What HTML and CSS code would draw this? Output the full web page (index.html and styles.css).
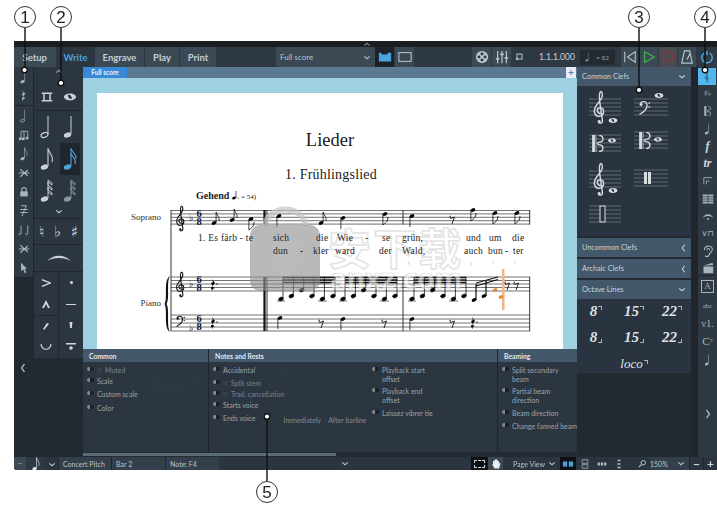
FILE: index.html
```html
<!DOCTYPE html>
<html lang="en">
<head>
<meta charset="utf-8">
<title>Dorico Write mode</title>
<link rel="stylesheet" href="styles.css">
</head>
<body>
<svg class="defs" aria-hidden="true">
  <defs>
    <symbol id="treble" viewBox="0 0 20 46"><path d="M11 30C6 30 5 24 9 23C15 21.5 17 30 11 33C4 36 1 28 4 22C6 17 13 13 13 6C13 2 11 1 10 3C8 7 9 12 11 24L13 38C14 43 8 44 8 40" fill="none" stroke="currentColor" stroke-width="1.8"/><circle cx="9" cy="40" r="1.8" fill="currentColor"/></symbol>
    <symbol id="bass" viewBox="0 0 20 24"><path d="M3 6C5 1 14 1 14 9C14 16 7 20 2 23" fill="none" stroke="currentColor" stroke-width="2.2"/><circle cx="4.5" cy="7" r="2.4" fill="currentColor"/><circle cx="17.5" cy="5" r="1.3" fill="currentColor"/><circle cx="17.5" cy="11" r="1.3" fill="currentColor"/></symbol>
    <symbol id="alto" viewBox="0 0 18 24"><path d="M0 0h4v24H0zM5 0h1v24H5z" fill="currentColor"/><path d="M7 12L10 10C17 11 17 0 10 1M7 12L10 14C17 13 17 24 10 23" fill="none" stroke="currentColor" stroke-width="2"/></symbol>
    <symbol id="whole" viewBox="0 0 14 8"><path d="M7 0C11 0 14 2 14 4S11 8 7 8S0 6 0 4S3 0 7 0ZM5 1.500C4 2 5 6 8 6.500C10 6 9 2 6 1.300Z" fill="currentColor" fill-rule="evenodd"/></symbol>
    <symbol id="i-half" viewBox="0 0 20 24"><ellipse cx="7.500" cy="20" rx="3.600" ry="2.300" transform="rotate(-20 7.500 20)" fill="none" stroke="currentColor" stroke-width="1.200"/><path d="M11 19V1" stroke="currentColor" stroke-width="1"/></symbol>
    <symbol id="i-q" viewBox="0 0 20 24"><ellipse cx="7.500" cy="20" rx="3.800" ry="2.500" transform="rotate(-20 7.500 20)" fill="currentColor"/><path d="M11 19V1" stroke="currentColor" stroke-width="1"/></symbol>
    <symbol id="i-8" viewBox="0 0 20 24"><ellipse cx="7.500" cy="20" rx="3.800" ry="2.500" transform="rotate(-20 7.500 20)" fill="currentColor"/><path d="M11 19V1C12 7 17 8 15 15" fill="none" stroke="currentColor" stroke-width="1.100"/></symbol>
    <symbol id="i-16" viewBox="0 0 20 24"><ellipse cx="7.500" cy="20" rx="3.800" ry="2.500" transform="rotate(-20 7.500 20)" fill="currentColor"/><path d="M11 19V1C12 6 17 7 16 12M11 6C12 11 17 12 15 17" fill="none" stroke="currentColor" stroke-width="1.100"/></symbol>
    <symbol id="i-32" viewBox="0 0 20 24"><ellipse cx="7.500" cy="20" rx="3.800" ry="2.500" transform="rotate(-20 7.500 20)" fill="currentColor"/><path d="M11 19V1L15 4V6L11 3V6L15 9V11L11 8V11L15 14V16L11 13" fill="none" stroke="currentColor" stroke-width=".9"/></symbol>
    <symbol id="i-dotrest" viewBox="0 0 16 16"><path d="M6 1L10 5L7 8L10 12C8 11 6 12 7 15C4 12 5 9 8 10L5 6L7 4Z" fill="currentColor"/></symbol>
    <symbol id="i-tuplet" viewBox="0 0 16 16"><path d="M4 13V3H13V12M8 13V3" fill="none" stroke="currentColor" stroke-width="1.200"/><circle cx="3" cy="13" r="2" fill="currentColor"/><circle cx="7" cy="13" r="2" fill="currentColor"/><circle cx="12" cy="12" r="2" fill="currentColor"/></symbol>
    <symbol id="i-lock" viewBox="0 0 16 16"><path d="M5 7V5a3 3 0 0 1 6 0V7" fill="none" stroke="currentColor" stroke-width="1.500"/><rect x="3" y="7" width="10" height="7" rx="1" fill="currentColor"/></symbol>
    <symbol id="i-cursor" viewBox="0 0 16 16"><path d="M4 1L12 9H9L11 14L9 15L7 10L4 12Z" fill="currentColor"/></symbol>
    <symbol id="i-scissor" viewBox="0 0 16 16"><path d="M3 3L13 12M3 13L13 4M1 8H15" fill="none" stroke="currentColor" stroke-width="1.400"/></symbol>
    <symbol id="i-bars" viewBox="0 0 16 12"><path d="M1 0H15V2H1ZM1 10H15V12H1ZM3 2H5V10H3ZM11 2H13V10H11Z" fill="currentColor"/></symbol>
    <symbol id="i-gr" viewBox="0 0 16 16"><path d="M4 1H11L5 15M3 6H13M3 10H13" fill="none" stroke="currentColor" stroke-width="1.300"/></symbol>
    <symbol id="i-reel" viewBox="0 0 16 16"><circle cx="8" cy="8" r="7" fill="currentColor"/><circle cx="8" cy="4.500" r="1.700" fill="#2e3943"/><circle cx="8" cy="11.500" r="1.700" fill="#2e3943"/><circle cx="4.500" cy="8" r="1.700" fill="#2e3943"/><circle cx="11.500" cy="8" r="1.700" fill="#2e3943"/></symbol>
    <symbol id="i-mixer" viewBox="0 0 16 16"><path d="M3 1V15M8 1V15M13 1V15" stroke="currentColor" stroke-width="1.400"/><path d="M1 9H5V11H1ZM6 4H10V6H6ZM11 8H15V10H11Z" fill="currentColor"/></symbol>
    <symbol id="i-metro" viewBox="0 0 16 16"><path d="M5 1H11L14 15H2ZM8 11L12 3" fill="none" stroke="currentColor" stroke-width="1.300"/></symbol>
    <symbol id="i-ear" viewBox="0 0 16 16"><path d="M4 7C3 2 12 0 13 6C13 10 9 10 9 13C8 15 5 15 5 13M7 7C7 4 10 5 10 7" fill="none" stroke="currentColor" stroke-width="1.300"/></symbol>
    <symbol id="i-clap" viewBox="0 0 16 16"><path d="M2 6H15V15H2Z M2 5L14 1L15 4L2 5Z" fill="currentColor"/></symbol>
    <symbol id="i-arch" viewBox="0 0 16 12"><path d="M1 9C3 2 13 2 15 9C12 5 4 5 1 9Z" fill="currentColor"/><circle cx="8" cy="10" r="1.300" fill="currentColor"/></symbol>
    <symbol id="i-rows" viewBox="0 0 16 16"><path d="M1 2H15V14H1Z" fill="currentColor"/><path d="M1 5H15M1 8H15M1 11H15M8 2V14" stroke="#2e3943"/></symbol>
    <symbol id="i-hand" viewBox="0 0 16 16"><path d="M4 8V4H6V2H8V2H10V4H12V8L13 6L14 7L12 14H6L3 9Z" fill="currentColor"/></symbol>
    <symbol id="i-mag" viewBox="0 0 16 16"><circle cx="10" cy="6" r="3.500" fill="none" stroke="currentColor" stroke-width="1.600"/><path d="M7 9L3 13" stroke="currentColor" stroke-width="2"/></symbol>
    <symbol id="chev-d" viewBox="0 0 10 6"><path d="M1.500 1.500L5 4.500L8.500 1.500" fill="none" stroke="currentColor" stroke-width="1.300"/></symbol>
    <symbol id="chev-l" viewBox="0 0 6 10"><path d="M4.500 1L1.500 5L4.500 9" fill="none" stroke="currentColor" stroke-width="1.300"/></symbol>
    <symbol id="chev-r" viewBox="0 0 6 10"><path d="M1.500 1L4.500 5L1.500 9" fill="none" stroke="currentColor" stroke-width="1.300"/></symbol>
  </defs>
</svg>

<main class="app">
  <div class="titlestrip"><svg class="ic-chev-up"><use href="#chev-d"/></svg></div>

  <header class="toolbar">
    <nav class="tabs">
      <span class="tab tab-setup">Setup</span>
      <span class="tab tab-active">Write</span>
      <span class="tab tab-engrave">Engrave</span>
      <span class="tab tab-play">Play</span>
      <span class="tab tab-print">Print</span>
    </nav>
    <div class="layout-select"><span>Full score</span><svg class="ic-chev"><use href="#chev-d"/></svg></div>
    <span class="tool-btn tool-on"><svg class="ic-14 blue" viewBox="0 0 16 12"><path d="M1 1H4V3H11V1H15V11H1Z" fill="currentColor"/></svg></span>
    <span class="tool-btn"><svg class="ic-14" viewBox="0 0 16 12"><rect x="1" y="1" width="14" height="10" fill="none" stroke="currentColor" stroke-width="1.200"/></svg></span>
    <div class="tool-right">
      <span class="tool-btn"><svg class="ic-14"><use href="#i-reel"/></svg></span>
      <span class="tool-btn"><svg class="ic-14"><use href="#i-mixer"/></svg></span>
      <span class="tool-btn tool-small"><svg class="ic-8" viewBox="0 0 8 8"><rect x="2" y="1" width="5" height="5" fill="none" stroke="currentColor"/><rect x="1" y="5" width="2" height="2" fill="currentColor"/></svg></span>
      <span class="position">1.1.1.000</span>
      <span class="tempo"><svg class="ic-10"><use href="#i-q"/></svg><span>= 82</span></span>
      <span class="transport"><svg class="ic-14" viewBox="0 0 16 16"><path d="M2 2V14M14 2L5 8L14 14Z" fill="none" stroke="currentColor" stroke-width="1.200"/></svg></span>
      <span class="transport"><svg class="ic-14 green" viewBox="0 0 16 16"><path d="M3 2L14 8L3 14Z" fill="none" stroke="currentColor" stroke-width="1.400"/></svg></span>
      <span class="transport transport-rec"><svg class="ic-14 red" viewBox="0 0 16 16"><circle cx="8" cy="8" r="5.500" fill="none" stroke="currentColor" stroke-width="1.400"/></svg></span>
      <span class="transport"><svg class="ic-14"><use href="#i-metro"/></svg></span>
      <span class="power"><svg class="ic-14 blue" viewBox="0 0 16 16"><path d="M5 3.500A6 6 0 1 0 11 3.500M8 1V6" fill="none" stroke="currentColor" stroke-width="1.800"/></svg></span>
    </div>
  </header>

  <div class="workspace">
    <aside class="left-rail">
      <div class="rail-group">
        <span class="rail-btn"><svg class="ic-14"><use href="#i-q"/></svg></span>
        <span class="rail-btn"><svg class="ic-12"><use href="#i-dotrest"/></svg></span>
      </div>
      <div class="rail-group">
        <span class="rail-btn"><svg class="ic-14"><use href="#i-half"/></svg></span>
        <span class="rail-btn"><svg class="ic-12"><use href="#i-tuplet"/></svg></span>
        <span class="rail-btn"><svg class="ic-14"><use href="#i-8"/></svg></span>
        <span class="rail-btn"><svg class="ic-12"><use href="#i-scissor"/></svg></span>
        <span class="rail-btn"><svg class="ic-12"><use href="#i-lock"/></svg></span>
        <span class="rail-btn"><svg class="ic-12"><use href="#i-gr"/></svg></span>
        <span class="rail-btn"><svg class="ic-12" viewBox="0 0 16 16"><path d="M4 2V12C4 15 1 15 1 12M13 2V12C13 15 10 15 10 12" fill="none" stroke="currentColor" stroke-width="1.200"/></svg></span>
        <span class="rail-btn"><svg class="ic-12"><use href="#i-scissor"/></svg></span>
        <span class="rail-btn"><svg class="ic-12"><use href="#i-cursor"/></svg></span>
      </div>
      <svg class="ic-chev-l rail-collapse"><use href="#chev-l"/></svg>
    </aside>

    <aside class="palette">
      <section class="pal pal-top">
        <svg class="ic-chev pal-up"><use href="#chev-d"/></svg>
        <div class="pal-row"><svg class="ic-12"><use href="#i-bars"/></svg><svg class="ic-12"><use href="#whole"/></svg></div>
      </section>
      <section class="pal pal-notes">
        <div class="pal-row h32"><svg class="ic-18"><use href="#i-half"/></svg><svg class="ic-18"><use href="#i-q"/></svg></div>
        <div class="pal-row h32"><svg class="ic-18"><use href="#i-8"/></svg><span class="pal-sel"><svg class="ic-18 blue"><use href="#i-16"/></svg></span></div>
        <div class="pal-row h32"><svg class="ic-18"><use href="#i-32"/></svg><svg class="ic-18 dim"><use href="#i-32"/></svg></div>
        <svg class="ic-chev pal-more"><use href="#chev-d"/></svg>
      </section>
      <section class="pal pal-acc">
        <span class="acc">♮</span><span class="acc">♭</span><span class="acc">♯</span>
      </section>
      <section class="pal pal-slur">
        <svg class="ic-slur" viewBox="0 0 26 8"><path d="M1 7C8 0 18 0 25 7C18 3 8 3 1 7Z" fill="currentColor"/></svg>
      </section>
      <section class="pal-grid">
        <span class="art"><svg class="ic-10" viewBox="0 0 12 10"><path d="M1 1L11 5L1 9" fill="none" stroke="currentColor" stroke-width="1.600"/></svg></span>
        <span class="art"><i class="art-dot"></i></span>
        <span class="art"><svg class="ic-8" viewBox="0 0 8 8"><path d="M4 0L8 8H6L4 4L2 8H0Z" fill="currentColor"/></svg></span>
        <span class="art"><i class="art-dash"></i></span>
        <span class="art"><svg class="ic-8" viewBox="0 0 8 8"><path d="M1 7L5 1L7 2L2 8Z" fill="currentColor"/></svg></span>
        <span class="art"><svg class="ic-8" viewBox="0 0 8 8"><path d="M2.500 0H5.500L4.800 6H3.200Z" fill="currentColor"/></svg></span>
        <span class="art"><svg class="ic-12" viewBox="0 0 12 8"><path d="M1 1C2 8 10 8 11 1" fill="none" stroke="currentColor" stroke-width="1.200"/></svg></span>
        <span class="art"><svg class="ic-10" viewBox="0 0 10 10"><path d="M0 1H10V2.500H0Z" fill="currentColor"/><circle cx="5" cy="6" r="1.800" fill="currentColor"/></svg></span>
      </section>
    </aside>

    <div class="center">
      <div class="score-tabs">
        <span class="score-tab">Full score</span>
        <span class="score-add">+</span>
      </div>
      <div class="canvas">
        <div class="page">
          <svg class="score" viewBox="97 93 466 256">
            <defs>
              <ellipse id="hd" rx="2.400" ry="1.700" transform="rotate(-22)"/>
              <g id="q-dn"><use href="#hd"/><path d="M-2.100 0V11" stroke="#111" stroke-width=".8"/></g>
              <g id="e-up"><use href="#hd"/><path d="M2.100 0V-11C3 -7 6 -6 5 -2" stroke="#111" stroke-width=".8" fill="none"/></g>
              <g id="e-dn"><use href="#q-dn"/><path d="M-2.100 11C0 9 3 8 3 3" stroke="#111" stroke-width=".9" fill="none"/></g>
              <path id="r8" d="M-1 -3a1.200 1.200 0 1 0 1 2L2.500 -2L0 5" fill="none" stroke="#111" stroke-width=".9"/>
              <g id="r4d"><path d="M-1 -6L2 -2L-.5 1L2 4C0 3 -1 4 0 6C-3 4 -2 1 0 2L-2 -2L0 -3Z"/><circle cx="4" cy="-1" r=".7"/></g>
              <g id="timesig"><text class="ts" y="0">6</text><text class="ts" y="7.500">8</text></g>
              <g id="run-a" stroke="#111" stroke-width=".8">
                <path d="M2 -22V-1M12.400 -22V-4M22.700 -22V-10M33 -22V-4M43.400 -22V-1M54 -22V-4"/>
                <path d="M2 -21.500H54" stroke-width="1.600"/><path d="M2 -19H54" stroke-width="1.600"/><path d="M2 -16.500H54" stroke-width="1.600"/>
                <use href="#hd" x="0" y="0"/><use href="#hd" x="10.400" y="-3"/><use href="#hd" x="20.700" y="-9"/><use href="#hd" x="31" y="-3"/><use href="#hd" x="41.400" y="0"/><use href="#hd" x="52" y="-3"/>
                <path d="M-4 2H4M37 2H46" stroke-width=".6"/>
              </g>
            </defs>

            <text class="t-title" x="330" y="146">Lieder</text>
            <text class="t-sub" x="331" y="179">1. Frühlingslied</text>
            <text class="t-tempo" x="196" y="199">Gehend</text>
            <g class="small-note"><ellipse cx="234" cy="198" rx="2" ry="1.400" transform="rotate(-22 234 198)"/><path d="M236 198V191" stroke="#111" stroke-width=".7"/><circle cx="238" cy="198" r=".5"/></g>
            <text class="t-small" x="241" y="199">= 54)</text>
            <text class="t-name" x="161" y="220">Soprano</text>
            <text class="t-name" x="161" y="306">Piano</text>

            <path class="staff" d="M171 210.500H530M171 213.900H530M171 217.300H530M171 220.700H530M171 224.100H530"/>
            <path class="staff" d="M171 277H530M171 280.500H530M171 284H530M171 287.500H530M171 291H530"/>
            <path class="staff" d="M171 315H530M171 319H530M171 323H530M171 327H530M171 331H530"/>
            <path class="bar" d="M171 210V331M403 210V224.500M403 277V331M529.700 210V224.500M529.700 277V331M267 210V224.500M267 277V331"/>
            <path class="bar-thick" d="M264.500 210V224.500M264.500 277V331"/>
            <path class="brace" d="M170 276C163 280 168 298 164.500 304C168 310 163 328 170 332C166 326 170 310 166.500 304C170 298 166 282 170 276Z"/>

            <use href="#treble" class="clef" x="174" y="205" width="14" height="28"/>
            <use href="#treble" class="clef" x="174" y="271" width="14" height="28"/>
            <use href="#bass" class="clef" x="174" y="315" width="13" height="12"/>
            <text class="t-flat" x="189" y="221">♭</text>
            <text class="t-flat" x="189" y="287">♭</text>
            <text class="t-flat" x="189" y="331">♭</text>
            <use href="#timesig" x="199" y="217"/>
            <use href="#timesig" x="199" y="283"/>
            <use href="#timesig" x="199" y="322"/>

            <use href="#e-up" x="214" y="223"/><use href="#e-up" x="232" y="220"/><use href="#e-dn" x="251" y="219"/>
            <use href="#q-dn" x="279" y="216"/><use href="#e-up" x="321" y="223"/><use href="#q-dn" x="343" y="218"/>
            <use href="#e-dn" x="385" y="214"/><use href="#q-dn" x="412" y="216"/><use href="#r8" x="452" y="219"/>
            <use href="#e-dn" x="473" y="210"/><use href="#e-dn" x="495" y="213"/><use href="#e-dn" x="517" y="213"/>

            <use href="#r4d" x="213" y="285"/><use href="#r4d" x="213" y="323"/>
            <use href="#run-a" x="281" y="299"/><use href="#run-a" x="343" y="299"/><use href="#run-a" x="412" y="299"/>
            <path class="beam" d="M476 283L498 277M476 286L498 279.500M476 284V300M486 281V296"/>
            <use href="#hd" x="474" y="300"/><use href="#hd" x="484" y="296"/>
            <rect class="ghost" x="502" y="269" width="2.500" height="41"/>
            <path class="ghost-marks" d="M409 261V265M471 262V266M493 261V264M515 261V264"/>
            <use href="#hd" class="orange" x="495" y="290"/><use href="#hd" class="orange" x="501" y="297"/>
            <use href="#r8" x="507" y="285"/><use href="#r8" x="516" y="285"/>
            <use href="#q-dn" x="280" y="318"/><use href="#r8" x="321" y="323"/><use href="#q-dn" x="343" y="319"/>
            <use href="#r8" x="384" y="323"/><use href="#q-dn" x="412" y="319"/><use href="#r8" x="452" y="323"/><use href="#r4d" x="473" y="323"/>

            <g class="wm">
              <path class="wm-arc" d="M265 226C268 204 303 204 306 226"/>
              <rect class="wm-box" x="250" y="225" width="70" height="66" rx="10"/>
              <path class="wm-shield" d="M272 240H298V262C298 270 290 274 285 276C280 274 272 270 272 262Z"/>
              <text class="wm-cn" x="328" y="265">安下载</text>
              <text class="wm-url" x="330" y="289">anxz.com</text>
            </g>
            <g class="t-lyric">
              <text x="198" y="241">1. Es färb - te</text><text x="273" y="241">sich</text><text x="316" y="241">die</text><text x="337" y="241">Wie</text><text x="365" y="241">-</text><text x="382" y="241">se</text><text x="402" y="241">grün,</text><text x="466" y="241">und</text><text x="489" y="241">um</text><text x="512" y="241">die</text>
              <text x="273" y="254">dun</text><text x="300" y="254">-</text><text x="313" y="254">kler</text><text x="335" y="254">ward</text><text x="379" y="254">der</text><text x="402" y="254">Wald,</text><text x="464" y="254">auch</text><text x="488" y="254">bun</text><text x="505" y="254">-</text><text x="513" y="254">ter</text>
            </g>
          </svg>
        </div>
      </div>

      <section class="props">
        <div class="prop-group pg-common">
          <h3 class="prop-head">Common</h3>
          <div class="prop-body">
            <div class="prop h11"><i class="tog"></i><i class="chk"></i><span class="off">Muted</span></div>
            <div class="prop h13"><i class="tog"></i><span>Scale</span><i class="fld fld-scale"></i></div>
            <div class="prop h14"><i class="tog"></i><span>Custom scale</span><i class="fld fld-custom"></i></div>
            <div class="prop h13"><i class="tog"></i><span>Color</span></div>
          </div>
        </div>
        <div class="prop-group pg-notes">
          <h3 class="prop-head">Notes and Rests</h3>
          <div class="prop-cols">
            <div class="prop-body col-a">
              <div class="prop h13"><i class="tog"></i><span>Accidental</span><i class="fld fld-acc"></i></div>
              <div class="prop h11"><i class="tog"></i><i class="chk"></i><span class="off">Split stem</span></div>
              <div class="prop h11"><i class="tog"></i><i class="chk"></i><span class="off">Trad. cancellation</span></div>
              <div class="prop h13"><i class="tog"></i><span>Starts voice</span></div>
              <div class="prop h13"><i class="tog"></i><span>Ends voice</span><span class="opt opt-first">Immediately</span><span class="opt">After barline</span></div>
            </div>
            <div class="prop-body col-b">
              <div class="prop h21"><i class="tog"></i><span class="wrap">Playback start offset</span></div>
              <div class="prop h22"><i class="tog"></i><span class="wrap">Playback end offset</span></div>
              <div class="prop h13"><i class="tog"></i><span>Laissez vibrer tie</span></div>
            </div>
          </div>
        </div>
        <div class="prop-group pg-beam">
          <h3 class="prop-head">Beaming</h3>
          <div class="prop-body">
            <div class="prop h21"><i class="tog"></i><span class="wrap">Split secondary beam</span></div>
            <div class="prop h22"><i class="tog"></i><span class="wrap">Partial beam direction</span></div>
            <div class="prop h13"><i class="tog"></i><span>Beam direction</span></div>
            <div class="prop h13"><i class="tog"></i><span class="nowrap">Change fanned beam dir</span></div>
          </div>
        </div>
        <div class="scrollbar"><span class="thumb"></span></div>
      </section>
    </div>

    <aside class="clefs">
      <div class="clef-head"><span>Common Clefs</span><svg class="ic-chev"><use href="#chev-d"/></svg></div>
      <div class="clef-body">
        <svg class="clef-art" viewBox="577 86 114 150">
          <path class="cl" d="M589 99H621M589 103H621M589 107H621M589 111H621M589 115H621"/>
          <use href="#treble" x="591" y="90" width="18" height="36"/><use href="#whole" x="608" y="118" width="10" height="5"/>
          <path class="cl" d="M634 99H668M634 103H668M634 107H668M634 111H668M634 115H668"/>
          <use href="#bass" x="638" y="100" width="13" height="15"/><use href="#whole" x="654" y="93" width="10" height="5"/>
          <path class="cl" d="M589 135H621M589 139H621M589 143H621M589 147H621M589 151H621"/>
          <use href="#alto" x="592" y="135" width="13" height="17"/><use href="#whole" x="608" y="138" width="8" height="5"/>
          <path class="cl" d="M634 132H668M634 136H668M634 140H668M634 144H668M634 148H668"/>
          <use href="#alto" x="639" y="132" width="13" height="17"/><use href="#whole" x="654" y="137" width="8" height="5"/>
          <path class="cl" d="M589 171H621M589 175H621M589 179H621M589 183H621M589 187H621"/>
          <use href="#treble" x="591" y="162" width="18" height="36"/><use href="#whole" x="608" y="188" width="10" height="5"/>
          <path class="cl" d="M634 170H668M634 174H668M634 178H668M634 182H668M634 186H668"/>
          <path class="cl-fill" d="M644 172H647V184H644ZM648 172H651V184H648Z"/>
          <path class="cl" d="M589 206H621M589 210H621M589 214H621M589 218H621M589 222H621"/>
          <rect class="cl-box" x="600" y="206" width="5" height="16"/>
        </svg>
      </div>
      <div class="clef-head mt2"><span>Uncommon Clefs</span><svg class="ic-chev-l"><use href="#chev-l"/></svg></div>
      <div class="clef-head mt2"><span>Archaic Clefs</span><svg class="ic-chev-l"><use href="#chev-l"/></svg></div>
      <div class="clef-head mt2"><span>Octave Lines</span><svg class="ic-chev"><use href="#chev-d"/></svg></div>
      <div class="oct-grid">
        <span class="oct">8<i class="br-up"></i></span><span class="oct">15<i class="br-up"></i></span><span class="oct">22<i class="br-up"></i></span>
        <span class="oct">8<i class="br-dn"></i></span><span class="oct">15<i class="br-dn"></i></span><span class="oct">22<i class="br-dn"></i></span>
        <span class="oct oct-loco">loco<i class="br-up"></i></span>
      </div>
    </aside>

    <aside class="right-rail">
      <span class="rr rr-on"><svg class="ic-12"><use href="#treble"/></svg></span>
      <span class="rr accs">♯♭</span>
      <span class="rr"><svg class="ic-10"><use href="#alto"/></svg></span>
      <span class="rr"><svg class="ic-12"><use href="#i-q"/></svg></span>
      <span class="rr glyph-f">f</span>
      <span class="rr glyph-tr">tr</span>
      <span class="rr"><svg class="ic-10" viewBox="0 0 12 10"><path d="M1 9V1H11M4 9V5H8" fill="none" stroke="currentColor"/></svg></span>
      <span class="rr"><svg class="ic-12"><use href="#i-rows"/></svg></span>
      <span class="rr"><svg class="ic-12"><use href="#i-arch"/></svg></span>
      <span class="rr glyph-vn">∨⊓</span>
      <span class="rr"><svg class="ic-14"><use href="#i-ear"/></svg></span>
      <span class="rr rr-last"><svg class="ic-12"><use href="#i-clap"/></svg></span>
      <span class="rr rr-a"><b class="boxed">A</b></span>
      <span class="rr rr-abc">abc</span>
      <span class="rr rr-v">v1.</span>
      <span class="rr rr-c">C<sup>7</sup></span>
      <span class="rr rr-end"><svg class="ic-12"><use href="#i-q"/></svg></span>
      <svg class="ic-chev-l rail-open"><use href="#chev-r"/></svg>
    </aside>
  </div>

  <footer class="status">
    <span class="st st-dots">▪▪▪</span>
    <span class="st st-note"><svg class="ic-14"><use href="#i-8"/></svg></span>
    <span class="st st-chev"><svg class="ic-chev"><use href="#chev-d"/></svg></span>
    <span class="st st-text st-53">Concert Pitch</span>
    <span class="st st-text st-54">Bar 2</span>
    <span class="st st-text st-54">Note: F4</span>
    <span class="st-mid"><svg class="ic-chev"><use href="#chev-d"/></svg></span>
    <span class="st st-black st-17"><i class="marquee"></i></span>
    <span class="st st-15"><svg class="ic-12 white"><use href="#i-hand"/></svg></span>
    <span class="st st-view"><span>Page View</span><svg class="ic-chev"><use href="#chev-d"/></svg></span>
    <span class="st st-black st-16"><svg class="ic-12 blue" viewBox="0 0 14 8"><path d="M1 1H6V7H1ZM8 1H13V7H8Z" fill="currentColor"/></svg></span>
    <span class="st st-16"><svg class="ic-10" viewBox="0 0 10 14"><path d="M1 1H9V6H1ZM1 8H9V13H1Z" fill="none" stroke="currentColor"/></svg></span>
    <span class="st st-16"><svg class="ic-10" viewBox="0 0 14 8"><path d="M1 2H4V6H1ZM5.500 2H8.500V6H5.500ZM10 2H13V6H10Z" fill="currentColor"/></svg></span>
    <span class="st st-16"><svg class="ic-10" viewBox="0 0 8 14"><path d="M2 1H6V3H2ZM2 6H6V8H2ZM2 11H6V13H2Z" fill="currentColor"/></svg></span>
    <span class="st st-mag"><svg class="ic-10"><use href="#i-mag"/></svg></span>
    <span class="st st-zoom"><span>150%</span><svg class="ic-chev"><use href="#chev-d"/></svg></span>
    <span class="st st-pm">−</span>
    <span class="st st-pm">+</span>
  </footer>
</main>

<svg class="callouts" viewBox="0 0 717 505">
  <g class="co-line">
    <path d="M25 28V68M61 28V81M639 28V88M705 28V68M267 419V481"/>
  </g>
  <g class="co-dot">
    <circle cx="24.500" cy="70" r="2.800"/><circle cx="61" cy="83" r="2.800"/><circle cx="639" cy="90" r="2.800"/><circle cx="705" cy="70" r="2.800"/><circle cx="267" cy="416.500" r="2.800"/>
  </g>
  <g class="co-ring">
    <circle cx="25" cy="17" r="10.500"/><circle cx="61" cy="17" r="10.500"/><circle cx="639" cy="17" r="10.500"/><circle cx="705" cy="17" r="10.500"/><circle cx="267" cy="492" r="10.500"/>
  </g>
  <g class="co-num">
    <text x="25" y="23">1</text><text x="61" y="23">2</text><text x="639" y="23">3</text><text x="705" y="23">4</text><text x="267" y="498">5</text>
  </g>
</svg>
</body>
</html>
```

FILE: styles.css
```css
* { box-sizing: border-box; }
html, body { margin: 0; padding: 0; background: #fff; }
body { position: relative; width: 717px; height: 505px; overflow: hidden; font-family: Lato, "Noto Sans", sans-serif; }
.defs { position: absolute; width: 0; height: 0; }

svg { display: block; flex: none; }
.ic-8 { width: 8px; height: 8px; }
.ic-10 { width: 10px; height: 10px; }
.ic-12 { width: 12px; height: 12px; }
.ic-14 { width: 14px; height: 14px; }
.ic-18 { width: 20px; height: 24px; }
.ic-chev { width: 8px; height: 5px; }
.ic-chev-l { width: 5px; height: 8px; }
.ic-chev-up { width: 8px; height: 5px; transform: rotate(180deg); color: #7f8b94; }
.blue { color: #4ba3dc; }
.green { color: #3fb54a; }
.red { color: #8c3a3a; }
.white { color: #e8ecee; }
.dim { color: #8d989f; }

.app { display: flex; flex-direction: column; width: 703px; height: 429px; margin: 41px 0 0 14px; background: #20262c; color: #b9c4cb; border-radius: 0 0 0 3px; overflow: hidden; filter: blur(.3px); }

.titlestrip { height: 6px; background: #1a1e21; display: flex; justify-content: center; align-items: center; padding-left: 2px; }

.toolbar { height: 20px; display: flex; background: #2e3943; flex: none; }
.tabs { display: flex; gap: 1px; width: 260px; margin-right: 1px; }
.tab { display: flex; align-items: center; justify-content: center; font-size: 9.500px; font-weight: 700; background: #3b4955; color: #c4ced4; height: 20px; }
.tab-setup { width: 42px; justify-content: flex-end; padding-right: 9px; }
.tab-active { width: 37px; background: #2b3641; color: #4ba3dc; }
.tab-engrave { width: 49px; }
.tab-play { width: 34px; }
.tab-print { width: 36px; }
.layout-select { width: 99px; margin-left: 1px; display: flex; align-items: center; justify-content: space-between; padding: 0 4px; font-size: 8px; background: #3b4955; }
.tool-btn { width: 19px; height: 20px; display: flex; align-items: center; justify-content: center; background: #3b4955; margin-left: 1px; }
.tool-on { background: #1c2227; margin-left: 0; }
.tool-right { margin-left: auto; display: flex; align-items: center; height: 20px; }
.tool-small { width: 14px; background: transparent; }
.tool-right .tool-btn { background: #3b4955; }
.tool-right .tool-small { background: #2e3943; margin-right: 13px; }
.position { font-size: 8.600px; width: 41px; color: #c9d2d8; }
.tempo { display: flex; align-items: center; gap: 3px; width: 35px; height: 15px; padding-left: 3px; background: #232a30; font-size: 6.500px; color: #8d989f; margin-right: 6px; }
.transport { width: 18px; height: 20px; display: flex; align-items: center; justify-content: center; background: #3b4955; margin-right: 1px; }
.transport-rec { background: #4a4a50; }
.power { width: 20px; display: flex; justify-content: center; }

.workspace { flex: 1; display: flex; min-height: 0; }

.left-rail { width: 19px; display: flex; flex-direction: column; background: #222930; flex: none; }
.rail-group { background: #2e3944; border-bottom: 1px solid #1f252b; }
.rail-btn { display: flex; width: 19px; height: 19px; align-items: center; justify-content: center; color: #a9b4bb; }
.rail-collapse { margin: 85px 0 0 6px; width: 6px; height: 10px; color: #a9b4bb; }

.palette { width: 50px; display: flex; flex-direction: column; background: #222930; border-left: 1px solid #1f252b; flex: none; }
.pal { display: flex; flex-direction: column; background: #2c3641; border-bottom: 1px solid #20262c; color: #c9d2d8; }
.pal-top { height: 44px; align-items: center; }
.pal-up { transform: rotate(180deg); margin-top: 2px; opacity: .7; }
.pal-row { display: flex; justify-content: space-around; align-items: center; width: 100%; padding: 0 2px; }
.pal-top .pal-row { margin-top: 17px; }
.pal-notes { height: 108px; align-items: center; }
.h32 { height: 32px; }
.pal-sel { width: 20px; height: 32px; background: #1f262c; display: flex; align-items: center; justify-content: center; }
.pal-more { margin-top: 2px; }
.pal-acc { height: 26px; flex-direction: row; justify-content: space-around; align-items: center; }
.acc { font: 15px "DejaVu Sans", sans-serif; color: #d2d9de; }
.pal-slur { height: 27px; align-items: center; justify-content: center; }
.ic-slur { width: 26px; height: 8px; }
.pal-grid { display: grid; grid-template-columns: 25px 24px; grid-auto-rows: 21.500px; background: #2c3641; color: #d2d9de; height: 86px; }
.art { display: flex; align-items: center; justify-content: center; border-right: 1px solid #222930; }
.art:nth-child(2n) { border-right: 0; }
.art:nth-child(5) { border-top: 1px solid #222930; }
.art-dot { width: 3px; height: 3px; background: currentColor; border-radius: 50%; }
.art-dash { width: 10px; height: 1.500px; background: currentColor; }

.center { width: 494px; display: flex; flex-direction: column; flex: none; }
.score-tabs { height: 11px; flex: none; background: #5b7a92; display: flex; justify-content: space-between; }
.score-tab { width: 44px; background: #3a88d8; color: #e8f2fa; font-size: 6.500px; font-weight: 700; display: flex; align-items: center; justify-content: center; }
.score-add { width: 10px; margin-right: 1px; background: #e6eef4; color: #3a88d8; font-size: 10px; font-weight: 700; line-height: 10px; text-align: center; }
.canvas { flex: 1; padding: 15px 14px 0 14px; background: #9dd0e1; min-height: 0; }
.page { height: 100%; background: #fff; }
.score { width: 466px; height: 256px; }

.staff { stroke: #333; stroke-width: .7; fill: none; }
.bar { stroke: #222; stroke-width: .9; fill: none; }
.bar-thick { stroke: #111; stroke-width: 2.200; fill: none; }
.brace { fill: #111; }
.clef { color: #111; }
.score text { font-family: "Liberation Serif", serif; fill: #1a1a1a; }
.score .t-title { font-size: 18.500px; text-anchor: middle; }
.score .t-sub { font-size: 14px; text-anchor: middle; letter-spacing: .2px; }
.score .t-tempo { font-size: 10px; font-weight: 700; }
.score .t-small { font-size: 7px; }
.score .t-name { font-size: 9px; text-anchor: end; fill: #333; }
.score .t-flat { font: 9px "DejaVu Sans", sans-serif; fill: #222; }
.score .ts { font-size: 10.500px; font-weight: 700; text-anchor: middle; fill: #111; }
.t-lyric text { font-size: 9.500px; letter-spacing: .25px; fill: #222; }
.beam { stroke: #111; stroke-width: 1.200; fill: none; }
.ghost { fill: #f2b58a; }
.ghost-marks { stroke: #f2c8a8; stroke-width: 1; fill: none; }
.orange { fill: #e98a35; }
.wm-arc { fill: none; stroke: #c3c3c3; stroke-width: 6; opacity: .7; }
.wm-box { fill: #8e8e8e; opacity: .62; }
.wm-shield { fill: #bdbdbd; opacity: .55; }
.score .wm-cn { font: 700 43px "Noto Sans CJK SC", sans-serif; fill: #fff; stroke: #c8c8c8; stroke-width: 1.500; opacity: .5; letter-spacing: 2px; }
.score .wm-url { font: 700 28px "Noto Sans", sans-serif; fill: #fff; stroke: #b5b5b5; stroke-width: .7; opacity: .55; }

.props { height: 108px; flex: none; display: grid; grid-template-columns: 126px 289px 79px; grid-template-rows: 1fr 5px; background: #1f262c; font-size: 7px; color: #98a4ac; overflow: hidden; }
.prop-group { display: flex; flex-direction: column; background: #2c3641; border-right: 1px solid #1f252b; min-width: 0; overflow: hidden; }
.pg-beam { border-right: 0; }
.prop-head { margin: 0; height: 13px; flex: none; background: #43586a; font-size: 6.800px; font-weight: 700; color: #e2e8ec; padding: 0 6px; display: flex; align-items: center; }
.prop-body { display: flex; flex-direction: column; padding: 3px 0 0 4px; }
.prop { display: flex; align-items: flex-start; position: relative; line-height: 10px; }
.prop span { white-space: nowrap; }
.prop .wrap { white-space: normal; width: 48px; line-height: 8.500px; padding-top: 1px; }
.prop .nowrap { white-space: nowrap; }
.h11 { height: 11px; } .h13 { height: 13px; } .h14 { height: 14px; } .h21 { height: 21px; } .h22 { height: 22px; }
.tog { flex: none; width: 7px; height: 4px; background: #1a2026; border-radius: 2px; margin: 2px 3px 0 0; border-left: 3px solid #7e8a93; }
.chk { flex: none; width: 5px; height: 5px; margin: 3px 3px 0 0; background: #343f4a; }
.off { color: #76828b; }
.fld { flex: none; height: 11px; border: 1px solid #2f3a45; }
.fld-scale { width: 47px; margin-left: 39px; }
.fld-custom { width: 30px; margin-left: 17px; }
.fld-acc { width: 44px; margin-left: 25px; }
.prop-cols { display: flex; }
.col-a { width: 159px; }
.col-b { padding-left: 4px; }
.opt-first { margin-left: 28px; }
.prop .opt { color: #818d96; margin-right: 7px; padding-top: 2px; }
.scrollbar { grid-column: 1 / -1; background: #232a31; height: 5px; }
.thumb { display: block; width: 253px; height: 3px; margin-top: 1px; background: #5a6a76; }

.clefs { width: 114px; display: flex; flex-direction: column; background: #222930; flex: none; }
.clef-head { height: 19px; flex: none; display: flex; align-items: center; justify-content: space-between; padding: 0 5px 0 5px; background: #43586a; color: #c9d3da; font-size: 7.300px; }
.mt2 { margin-top: 2px; }
.clef-body { height: 150px; flex: none; background: #2a3440; color: #d7dee2; }
.clef-art { width: 114px; height: 150px; }
.cl { stroke: #7a858d; stroke-width: .7; fill: none; }
.cl-fill { fill: #d7dee2; }
.cl-box { fill: #2a3440; stroke: #d7dee2; stroke-width: 1; }
.oct-grid { display: grid; grid-template-columns: repeat(3, 38px); grid-template-rows: 25px 27px 22px; height: 74px; background: #2a3440; }
.oct { font: italic 700 15px "Liberation Serif", serif; color: #dde3e7; display: flex; align-items: center; justify-content: center; }
.oct i { display: block; width: 4px; height: 4px; margin-left: 1px; border-color: #aab4bb; border-style: solid; border-width: 0; }
.oct .br-up { border-top-width: 1px; border-right-width: 1px; align-self: flex-start; margin-top: 7px; }
.oct .br-dn { border-bottom-width: 1px; border-right-width: 1px; align-self: flex-end; margin-bottom: 8px; }
.oct-loco { grid-column: 1 / -1; font-weight: 400; font-size: 13px; padding-top: 4px; }
.oct-loco .br-up { margin-top: 5px; }

.right-rail { width: 20px; margin-left: 6px; display: flex; flex-direction: column; background: #2e3944; color: #a9b4bb; flex: none; border-left: 1px solid #1f252b; }
.rr { display: flex; height: 17.500px; flex: none; align-items: center; justify-content: center; font-size: 8px; }
.rr-on { background: #53b6ee; color: #1d3240; margin: 1px 1px 0 0; height: 17px; }
.accs { font: 8px "DejaVu Sans", sans-serif; }
.glyph-f, .glyph-tr { font: italic 700 12px "Liberation Serif", serif; color: #d2d9de; }
.glyph-vn { font: 8px "DejaVu Sans", sans-serif; }
.rr-last { border-bottom: 1px solid #1f252b; height: 16px; }
.rr-a { height: 20px; }
.boxed { font: 9px "Liberation Serif", serif; border: 1px solid #a9b4bb; width: 13px; height: 13px; display: block; text-align: center; line-height: 11px; }
.rr-abc { font: 7px "Liberation Serif", serif; height: 19px; }
.rr-v { font: 10px "Liberation Serif", serif; height: 17px; }
.rr-c { font: 11px "Liberation Serif", serif; height: 18px; }
.rr-c sup { font-size: 6px; line-height: 0; }
.rr-end { height: 19px; }
.right-rail .rail-open { width: 6px; height: 10px; margin: 40px 0 0 7px; color: #a9b4bb; }

.status { height: 13px; flex: none; display: flex; align-items: center; background: #2a3540; font-size: 7px; color: #b8c3ca; white-space: nowrap; }
.st { display: flex; height: 13px; align-items: center; justify-content: center; flex: none; }
.st-dots { width: 12px; background: #3b4955; font-size: 4px; letter-spacing: -.5px; color: #8d989f; }
.st-note { width: 19px; background: #2e3943; color: #e8ecee; }
.st-chev { width: 13px; padding-top: 1px; }
.st-text { justify-content: flex-start; padding-left: 4px; border-left: 1px solid #1f262c; background: #333f4a; }
.st-53 { width: 53px; }
.st-54 { width: 54px; }
.st-mid { width: 252px; flex: none; display: flex; justify-content: center; }
.st-black { background: #0e1114; }
.st-17 { width: 17px; }
.st-15 { width: 15px; background: #3b4955; }
.marquee { display: block; width: 11px; height: 8px; border: 1px dashed #c9d2d8; }
.st-view { width: 57px; justify-content: space-between; padding: 0 4px 0 10px; }
.st-16 { width: 16px; }
.st-16 + .st-16 { margin-left: 1px; }
.st-mag { width: 23px; padding-left: 6px; }
.st-zoom { width: 39px; justify-content: space-between; padding-right: 4px; background: #333f4a; }
.st-pm { width: 14px; font-size: 12px; font-weight: 700; color: #d2d9de; border-left: 1px solid #1f262c; }

.callouts { position: absolute; left: 0; top: 0; width: 717px; height: 505px; pointer-events: none; filter: blur(.25px); }
.co-line { stroke: #111; stroke-width: 1.400; fill: none; }
.co-dot circle { fill: #fff; stroke: #111; stroke-width: 1.400; }
.co-ring circle { fill: #fff; stroke: #333; stroke-width: 1; }
.co-num text { font: 17px "Liberation Sans", sans-serif; fill: #222; text-anchor: middle; }
```
